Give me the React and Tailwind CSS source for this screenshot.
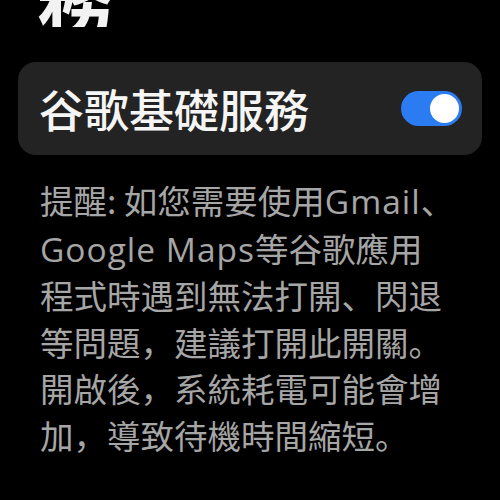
const latin = 'font-["Open_Sans",sans-serif] tracking-[1px]'

export default function App() {
  return (
    <div
      className="w-[500px] h-[500px] bg-black overflow-hidden"
      style={{ fontFamily: '"Noto Sans CJK SC", "Noto Sans CJK TC", sans-serif' }}
    >
      <div className="h-[27px] overflow-hidden flex flex-col justify-end pl-[37px]">
        <div className="text-[76px] font-bold leading-none text-[#f2f2f2] -mb-[9px]">務</div>
      </div>

      <div className="mt-[35px] mx-[18px] h-[93px] rounded-[18px] bg-[#232323] flex items-center justify-between pl-[21px] pr-[20px]">
        <span className="text-[45px] font-medium text-[#f5f5f5] leading-none">谷歌基礎服務</span>
        <div className="w-[61px] h-[35px] rounded-full bg-[#2b7cf2] flex items-center justify-end pr-[3px]">
          <div className="w-[29px] h-[29px] rounded-full bg-white" />
        </div>
      </div>

      <div className="mt-[22px] pl-[40px] text-[33.5px] leading-[46.6px] text-[#a6a6a6] whitespace-nowrap">
        <div>提醒: 如您需要使用<span className={latin}>Gmail</span>、</div>
        <div><span className={latin}>Google Maps</span>等谷歌應用</div>
        <div>程式時遇到無法打開、閃退</div>
        <div>等問題，建議打開此開關。</div>
        <div>開啟後，系統耗電可能會增</div>
        <div>加，導致待機時間縮短。</div>
      </div>
    </div>
  )
}
